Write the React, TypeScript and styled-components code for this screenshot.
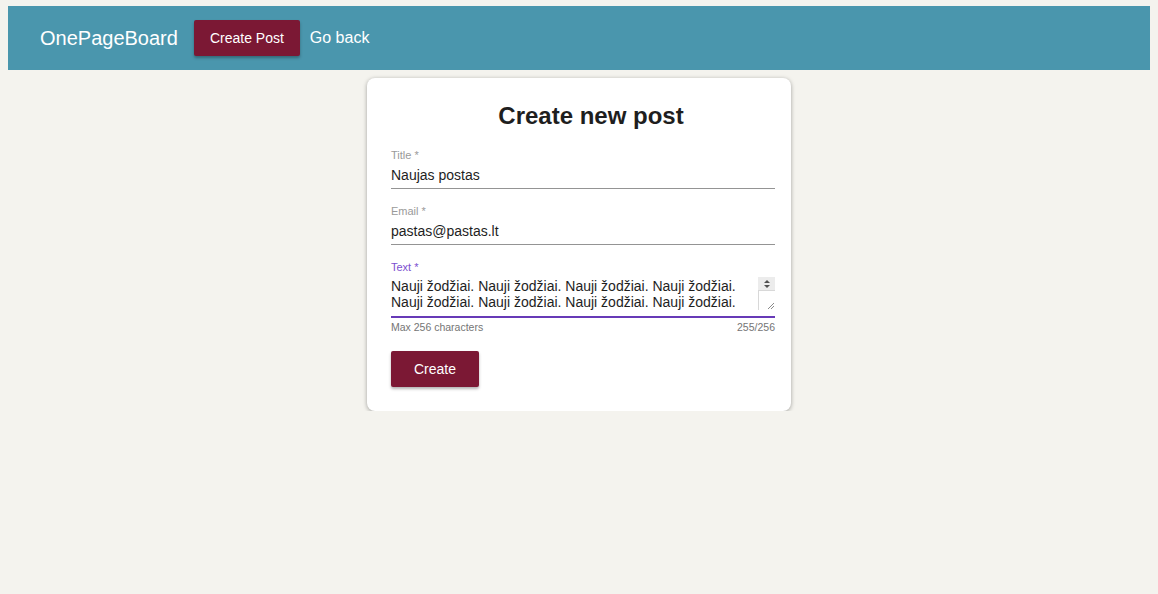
import React from "react";
import styled, { createGlobalStyle } from "styled-components";

const GlobalStyle = createGlobalStyle`
  html, body { background: #f4f3ee; }
  body {
    margin: 6px 8px 0;
    font-family: "Liberation Sans", Arial, sans-serif;
    color: #202020;
  }
`;

const Header = styled.header`
  height: 64px;
  background: #4a96ad;
  display: flex;
  align-items: center;
  padding: 0 32px;
  color: #fff;
`;

const Logo = styled.div`
  font-size: 20px;
  margin-right: 16px;
`;

const Button = styled.button<{ $size?: "sm" | "md" }>`
  background: #7b1834;
  color: #fff;
  border: none;
  border-radius: 2px;
  font-family: "Liberation Sans", Arial, sans-serif;
  font-size: 14px;
  height: 36px;
  padding: 0 ${(p) => (p.$size === "md" ? "23px" : "16px")};
  box-shadow: 0 2px 3px rgba(0, 0, 0, 0.3);
  cursor: pointer;
`;

const NavLink = styled.a`
  color: #fff;
  font-size: 16px;
  margin-left: 10px;
  text-decoration: none;
`;

const Card = styled.main`
  width: 424px;
  box-sizing: border-box;
  margin: 8px auto 0;
  background: #fff;
  border-radius: 8px;
  box-shadow: 0 1px 4px rgba(0, 0, 0, 0.35);
  padding: 24px 16px 24px 24px;
  display: flex;
  flex-direction: column;
`;

const Title = styled.h1`
  margin: 0 0 19px;
  padding-left: 16px;
  font-size: 24px;
  line-height: 28px;
  font-weight: bold;
  text-align: center;
  color: #1e1e1e;
`;

const Field = styled.div`
  display: flex;
  flex-direction: column;
  margin-bottom: 16px;
  position: relative;
`;

const Label = styled.label<{ $focused?: boolean }>`
  font-size: 11px;
  line-height: 13px;
  color: ${(p) => (p.$focused ? "#7b4fd0" : "#9a9a9a")};
`;

const Input = styled.input`
  border: none;
  border-bottom: 1px solid #949494;
  font-family: "Liberation Sans", Arial, sans-serif;
  font-size: 14px;
  line-height: 16px;
  height: 27px;
  box-sizing: border-box;
  color: #1e1e1e;
  padding: 5px 0 5px;
  outline: none;
  background: transparent;
`;

const TextWrap = styled.div`
  position: relative;
  border-bottom: 2px solid #673ab7;
  padding: 4px 0 6px;
`;

const TextArea = styled.textarea`
  display: block;
  width: 100%;
  box-sizing: border-box;
  border: none;
  outline: none;
  resize: none;
  overflow: hidden;
  font-family: "Liberation Sans", Arial, sans-serif;
  font-size: 14px;
  line-height: 16px;
  height: 32px;
  padding: 0 20px 0 0;
  color: #1e1e1e;
  background: transparent;
`;

const ScrollBox = styled.div`
  position: absolute;
  right: 0;
  top: 3px;
  width: 17px;
  height: 33px;
  display: flex;
  flex-direction: column;
`;

const Spin = styled.div`
  height: 13px;
  background: #ececec;
  display: flex;
  align-items: center;
  justify-content: center;
`;

const Grip = styled.div`
  flex: 1;
  border-left: 1px solid #d8d8d8;
  border-top: 1px solid #d8d8d8;
  background: #fff;
  display: flex;
  align-items: flex-end;
  justify-content: flex-end;
`;

const Helper = styled.div`
  display: flex;
  justify-content: space-between;
  font-size: 10.5px;
  line-height: 13px;
  color: #757575;
  margin-top: 3px;
`;

const Actions = styled.div`
  margin-top: 1px;
`;

export default function App() {
  return (
    <>
      <GlobalStyle />
      <Header>
        <Logo>OnePageBoard</Logo>
        <Button>Create Post</Button>
        <NavLink href="#">Go back</NavLink>
      </Header>
      <Card>
        <Title>Create new post</Title>
        <Field>
          <Label>Title *</Label>
          <Input defaultValue="Naujas postas" />
        </Field>
        <Field>
          <Label>Email *</Label>
          <Input defaultValue="pastas@pastas.lt" />
        </Field>
        <Field>
          <Label $focused>Text *</Label>
          <TextWrap>
            <TextArea
              defaultValue={
                "Nauji žodžiai. Nauji žodžiai. Nauji žodžiai. Nauji žodžiai. Nauji žodžiai. Nauji žodžiai. Nauji žodžiai. Nauji žodžiai."
              }
            />
            <ScrollBox>
              <Spin>
                <svg width="8" height="10" viewBox="0 0 8 10">
                  <path d="M4 1 L7 4 H1 Z" fill="#505050" />
                  <path d="M4 9 L7 6 H1 Z" fill="#505050" />
                </svg>
              </Spin>
              <Grip>
                <svg width="9" height="9" viewBox="0 0 9 9">
                  <path d="M8 2 L2 8 M8 5 L5 8" stroke="#8a8a8a" strokeWidth="1" />
                </svg>
              </Grip>
            </ScrollBox>
          </TextWrap>
          <Helper>
            <span>Max 256 characters</span>
            <span>255/256</span>
          </Helper>
        </Field>
        <Actions>
          <Button $size="md">Create</Button>
        </Actions>
      </Card>
    </>
  );
}
